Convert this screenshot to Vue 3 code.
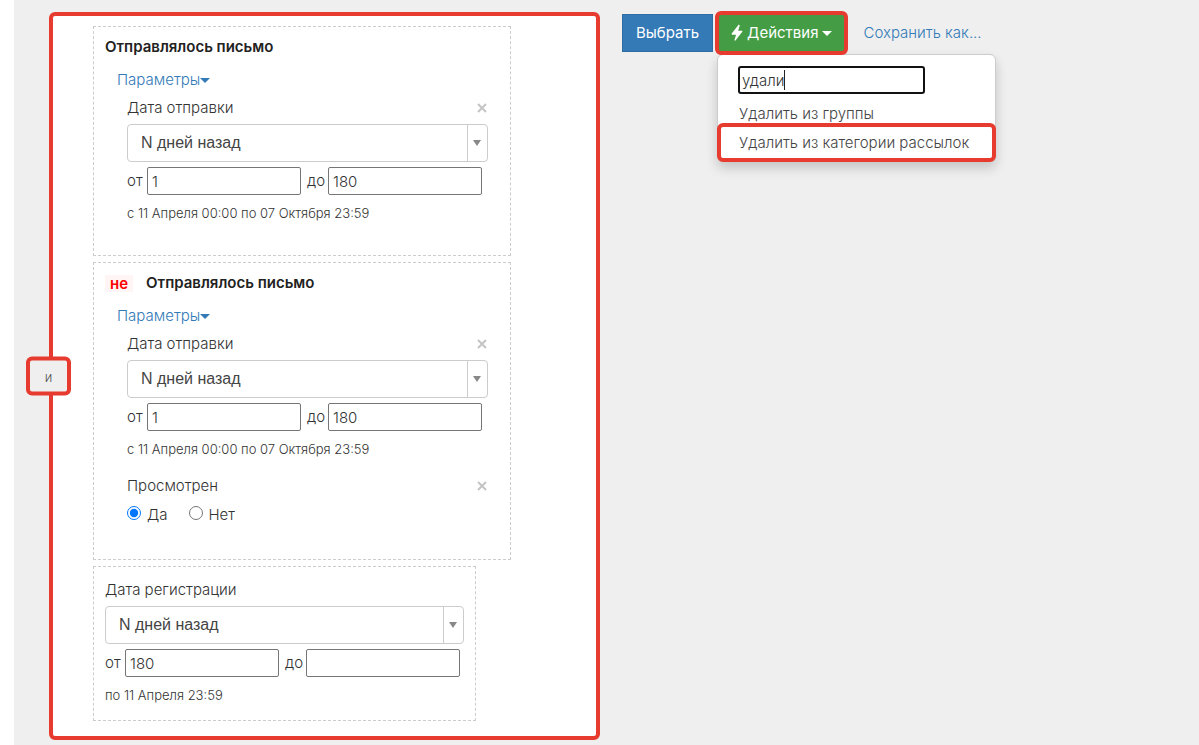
<script setup>
import { ref } from 'vue'

const cards = ref([
  {
    id: 'sent',
    title: 'Отправлялось письмо',
    negated: false,
    from: '1',
    to: '180',
    note: 'с 11 Апреля 00:00 по 07 Октября 23:59',
    viewed: null,
  },
  {
    id: 'not-sent',
    title: 'Отправлялось письмо',
    negated: true,
    from: '1',
    to: '180',
    note: 'с 11 Апреля 00:00 по 07 Октября 23:59',
    viewed: 'yes',
  },
])
const registration = ref({ from: '180', to: '', note: 'по 11 Апреля 23:59' })
const query = ref('удали')
</script>

<template>
  <div class="page">
    <main class="content">
      <section class="rules" aria-label="Условия">
        <button type="button" class="joiner">и</button>

        <article v-for="card in cards" :key="card.id" class="card">
          <h2 class="title"><span v-if="card.negated" class="not">не</span>{{ card.title }}</h2>
          <a href="#" class="params">Параметры<span class="caret"></span></a>
          <div class="fields">
            <div class="field">
              <div class="field-head">
                <label :for="card.id + '-mode'">Дата отправки</label>
                <button type="button" class="remove" aria-label="Убрать">
                  <svg viewBox="0 0 10 10" width="10" height="10"><path d="M1 1l8 8M9 1l-8 8" /></svg>
                </button>
              </div>
              <div class="select-box">
                <select :id="card.id + '-mode'"><option>N дней назад</option></select>
              </div>
              <div class="range">
                <label :for="card.id + '-from'">от</label>
                <input :id="card.id + '-from'" v-model="card.from" type="text" />
                <label :for="card.id + '-to'" class="to">до</label>
                <input :id="card.id + '-to'" v-model="card.to" type="text" />
              </div>
              <p class="note">{{ card.note }}</p>
            </div>
            <div v-if="card.viewed" class="field">
              <div class="field-head">
                <span>Просмотрен</span>
                <button type="button" class="remove" aria-label="Убрать">
                  <svg viewBox="0 0 10 10" width="10" height="10"><path d="M1 1l8 8M9 1l-8 8" /></svg>
                </button>
              </div>
              <div class="radios">
                <label><input v-model="card.viewed" type="radio" name="viewed" value="yes" />Да</label>
                <label><input v-model="card.viewed" type="radio" name="viewed" value="no" />Нет</label>
              </div>
            </div>
          </div>
        </article>

        <article class="card compact">
          <div class="field">
            <div class="field-head"><label for="reg-mode">Дата регистрации</label></div>
            <div class="select-box">
              <select id="reg-mode"><option>N дней назад</option></select>
            </div>
            <div class="range">
              <label for="reg-from">от</label>
              <input id="reg-from" v-model="registration.from" type="text" />
              <label for="reg-to" class="to">до</label>
              <input id="reg-to" v-model="registration.to" type="text" />
            </div>
            <p class="note">{{ registration.note }}</p>
          </div>
        </article>
      </section>

      <div class="toolbar">
        <button type="button" class="pick">Выбрать</button>
        <div class="dropdown">
          <button type="button" class="actions">
            <svg class="bolt" viewBox="0 0 12 18" width="12" height="18"><path d="M7.8 0.5L0.5 9.8l0.6 0.9h4L3.4 16.2l0.9 0.5L11.5 7.6l-0.5-0.9H7.2L8.8 1.2z" /></svg>
            <span>Действия</span><span class="caret"></span>
          </button>
          <div class="menu">
            <div class="search">
              <input v-model="query" type="text" aria-label="Поиск действия" />
              <span class="cursor"></span>
            </div>
            <a href="#" class="item">Удалить из группы</a>
            <a href="#" class="item marked">Удалить из категории рассылок</a>
          </div>
        </div>
        <a href="#" class="save">Сохранить как...</a>
      </div>
    </main>
  </div>
</template>

<style>
body {
  margin: 0;
  background: #fff;
}
</style>

<style scoped>
* {
  box-sizing: border-box;
}
.page {
  min-height: 100vh;
  display: flex;
  padding-left: 14px;
  font-family: Inter, Roboto, "Liberation Sans", sans-serif;
  font-size: 15px;
  font-weight: 300;
  line-height: 24px;
  color: #333;
}
button,
input {
  font: inherit;
  color: inherit;
}
button {
  cursor: pointer;
}
a {
  color: #337ab7;
  text-decoration: none;
}
.content {
  flex: 1;
  display: flex;
  align-items: flex-start;
  gap: 22px;
  padding: 11px 35px 5px;
  background: #efefef;
}
.rules {
  position: relative;
  flex: 0 1 551px;
  min-width: 0;
  display: flex;
  flex-direction: column;
  gap: 6px;
  margin-top: 1px;
  padding: 10px 85px 15px 40px;
  border: 4px solid #e63b2e;
  border-radius: 6px;
  background: #fff;
}
.joiner {
  position: absolute;
  top: 50%;
  left: -27px;
  width: 45px;
  height: 39px;
  transform: translateY(-50%);
  padding: 0;
  border: 4px solid #e63b2e;
  border-radius: 6px;
  background: #efefef;
  font-size: 13px;
  color: #555;
}
.card {
  padding: 8px 11px 17px;
  border: 1px dashed #ccc;
}
.compact {
  margin-right: 35px;
  padding: 11px 11px 0;
}
.title {
  display: flex;
  align-items: center;
  gap: 13px;
  margin: 0 0 9px;
  font-size: 15px;
  line-height: 24px;
  font-weight: 600;
  color: #222;
}
.not {
  padding: 0 5px;
  line-height: 17px;
  background: #fff5f5;
  color: #f00;
}
.params {
  display: flex;
  align-items: center;
  margin: 0 12px 4px;
}
.caret {
  border: 5px solid transparent;
  border-top-color: currentColor;
  border-bottom: 0;
}
.fields {
  padding: 0 11px 0 22px;
}
.field {
  margin-bottom: 15px;
}
.field-head {
  display: flex;
  align-items: center;
  justify-content: space-between;
  margin-bottom: 4px;
}
.remove {
  display: flex;
  padding: 0;
  margin-right: 1px;
  border: 0;
  background: none;
}
.remove svg {
  fill: none;
  stroke: #c4c4c4;
  stroke-width: 2;
}
.select-box {
  position: relative;
  margin-bottom: 5px;
}
.select-box::before {
  content: "";
  position: absolute;
  top: 1px;
  bottom: 1px;
  right: 20px;
  border-left: 1px solid #ccc;
  pointer-events: none;
}
.select-box::after {
  content: "";
  position: absolute;
  top: 16px;
  right: 7px;
  border: 4px solid transparent;
  border-top: 6px solid #888;
  border-bottom: 0;
  pointer-events: none;
}
select {
  display: block;
  width: 100%;
  height: 38px;
  padding: 0 30px 2px 13px;
  appearance: none;
  border: 1px solid #ccc;
  border-radius: 4px;
  background: #fff;
  font-family: "Liberation Sans", Arial, sans-serif;
  font-size: 16px;
  color: #444;
}
.range {
  display: grid;
  grid-template-columns: 20px minmax(0, 154px) 27px minmax(0, 154px);
  align-items: center;
  margin-bottom: 8px;
}
.range input {
  width: 100%;
  height: 28px;
  padding: 0 4px;
  border: 1px solid #767676;
  border-radius: 2px;
  background: #fff;
}
.to {
  padding-left: 6px;
}
.note {
  margin: 0;
  font-size: 13px;
  line-height: 20px;
}
.radios {
  display: flex;
  gap: 21px;
  padding-top: 1px;
}
.radios label {
  display: flex;
  gap: 6px;
}
.radios input {
  width: 14px;
  height: 14px;
  margin: 3px 0 0;
}
.toolbar {
  flex: 1 0 auto;
  display: flex;
  align-items: center;
}
.pick {
  height: 38px;
  padding: 0 13px;
  border: 1px solid #2e6da4;
  background: #337ab7;
  color: #fff;
  font-weight: 400;
}
.dropdown {
  position: relative;
  margin: 0 15px 0 2px;
}
.actions {
  position: relative;
  z-index: 1;
  display: flex;
  align-items: center;
  gap: 4px;
  height: 44px;
  padding: 0 12px;
  border: 4px solid #e63b2e;
  border-radius: 6px;
  background: #449d44;
  color: #fff;
  font-weight: 400;
}
.bolt {
  fill: #fff;
}
.menu {
  position: absolute;
  top: 43px;
  left: 2px;
  width: 279px;
  padding-top: 11px;
  border: 1px solid #ccc;
  border-radius: 6px;
  background: #fff;
  box-shadow: 0 6px 12px rgba(0, 0, 0, 0.18);
}
.search {
  position: relative;
  margin: 0 70px 8px 20px;
}
.search input {
  display: block;
  width: 100%;
  height: 28px;
  padding: 0 2px;
  border: 2px solid #111;
  border-radius: 3px;
  outline: 0;
  background: #fff;
}
.cursor {
  position: absolute;
  top: 4px;
  left: 46px;
  height: 20px;
  border-left: 1px solid #222;
}
.item {
  display: block;
  padding: 0 21px;
  white-space: nowrap;
  color: #444;
}
.marked {
  position: relative;
  margin: -3px -1px -1px;
  padding: 4px 18px 3px;
  border: 4px solid #e63b2e;
  border-radius: 6px;
}
</style>
